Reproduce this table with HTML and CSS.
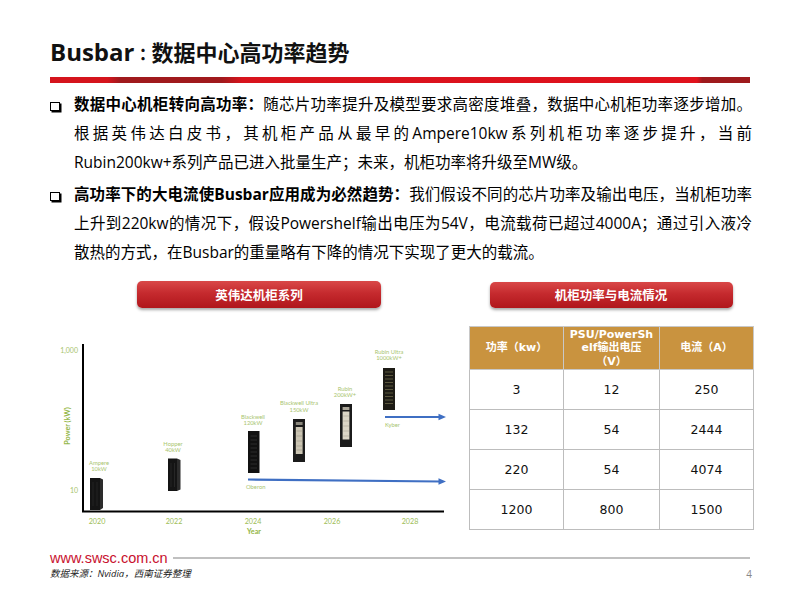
FILE: index.html
```html
<!DOCTYPE html>
<html lang="zh-CN">
<head>
<meta charset="utf-8">
<title>Busbar：数据中心高功率趋势</title>
<link rel="stylesheet" href="styles.css">
</head>
<body>
<div class="slide">
  <h1 class="title"><span class="lat">Busbar</span><span class="colon" lang="ja">：</span>数据中心高功率趋势</h1>
  <div class="rule"></div>

  <div class="points">
    <div class="point">
      <span class="box"></span>
      <p class="txt">
        <span class="ln"><b>数据中心机柜转向高功率：</b>随芯片功率提升及模型要求高密度堆叠，数据中心机柜功率逐步增加。</span>
        <span class="ln">根据英伟达白皮书，其机柜产品从最早的Ampere10kw系列机柜功率逐步提升，当前</span>
        <span class="ln last">Rubin200kw+系列产品已进入批量生产；未来，机柜功率将升级至MW级。</span>
      </p>
    </div>
    <div class="point">
      <span class="box"></span>
      <p class="txt">
        <span class="ln"><b>高功率下的大电流使Busbar应用成为必然趋势：</b>我们假设不同的芯片功率及输出电压，当机柜功率</span>
        <span class="ln">上升到220kw的情况下，假设Powershelf输出电压为54V，电流载荷已超过4000A；通过引入液冷</span>
        <span class="ln last">散热的方式，在Busbar的重量略有下降的情况下实现了更大的载流。</span>
      </p>
    </div>
  </div>

  <div class="charts">
    <div class="left">
      <div class="pill">英伟达机柜系列</div>
      <svg class="chart" viewBox="50 308 418 232" width="418" height="232" xmlns="http://www.w3.org/2000/svg">
        <!-- axes -->
        <line x1="83" y1="344" x2="83" y2="512" stroke="#000" stroke-width="2"/>
        <line x1="82" y1="511.5" x2="444" y2="511.5" stroke="#000" stroke-width="2"/>
        <g font-size="7" fill="#a7c46a">
          <text x="78" y="352.5" text-anchor="end">1,000</text>
          <text x="78" y="492.5" text-anchor="end">10</text>
        </g>
        <text x="0" y="0" transform="translate(69.5 426) rotate(-90)" text-anchor="middle" font-size="7.2" font-weight="700" fill="#93b646">Power (kW)</text>
        <g font-size="7.2" fill="#9dbd55" text-anchor="middle">
          <text x="97" y="524">2020</text>
          <text x="174" y="524">2022</text>
          <text x="253" y="524">2024</text>
          <text x="332" y="524">2026</text>
          <text x="410" y="524">2028</text>
        </g>
        <text x="254" y="534" font-size="7.2" font-weight="700" fill="#93b646" text-anchor="middle">Year</text>

        <!-- arrows -->
        <line x1="248" y1="479.5" x2="440" y2="481.5" stroke="#3f6fc3" stroke-width="2.2"/>
        <polygon points="438.5,478.3 446,481.6 438.5,484.8" fill="#3f6fc3"/>
        <line x1="385" y1="417" x2="440" y2="417" stroke="#3f6fc3" stroke-width="2.2"/>
        <polygon points="438.5,413.8 446,417 438.5,420.2" fill="#3f6fc3"/>

        <g font-size="5.8" fill="#a9c56f" text-anchor="middle">
          <text x="99" y="465">Ampere</text>
          <text x="99" y="471">10kW</text>
          <text x="173" y="446">Hopper</text>
          <text x="173" y="452">40kW</text>
          <text x="253" y="419">Blackwell</text>
          <text x="253" y="425">120kW</text>
          <text x="299" y="405">Blackwell Ultra</text>
          <text x="299" y="411.5">150kW</text>
          <text x="345" y="391">Rubin</text>
          <text x="345" y="397">200kW+</text>
          <text x="389" y="354">Rubin Ultra</text>
          <text x="389" y="360">1000kW+</text>
          <text x="246" y="488.5" text-anchor="start">Oberon</text>
          <text x="385" y="426.5" text-anchor="start">Kyber</text>
        </g>

        <!-- Ampere -->
        <rect x="90" y="478" width="10" height="32" fill="#141414"/>
        <polygon points="100,478 103,479.5 103,508 100,510" fill="#2c2c2c"/>
        <line x1="93" y1="482" x2="93" y2="506" stroke="#2e2e2e" stroke-width="0.6"/>
        <line x1="97" y1="482" x2="97" y2="506" stroke="#2e2e2e" stroke-width="0.6"/>
        <!-- Hopper -->
        <rect x="168" y="458.5" width="9" height="32.5" fill="#141414"/>
        <polygon points="177,458.5 180.5,460 180.5,489.5 177,491" fill="#2c2c2c"/>
        <line x1="171" y1="463" x2="171" y2="487" stroke="#2e2e2e" stroke-width="0.6"/>
        <line x1="174.5" y1="463" x2="174.5" y2="487" stroke="#333" stroke-width="0.6"/>
        <!-- Blackwell -->
        <rect x="248" y="431" width="11.5" height="42" fill="#111"/>
        <g stroke="#4a4a4a" stroke-width="0.5">
          <line x1="250.5" y1="436" x2="257" y2="436"/>
          <line x1="250.5" y1="440" x2="257" y2="440"/>
          <line x1="250.5" y1="444" x2="257" y2="444"/>
          <line x1="250.5" y1="448" x2="257" y2="448"/>
          <line x1="250.5" y1="452" x2="257" y2="452"/>
          <line x1="250.5" y1="456" x2="257" y2="456"/>
          <line x1="250.5" y1="460" x2="257" y2="460"/>
          <line x1="250.5" y1="464" x2="257" y2="464"/>
          <line x1="250.5" y1="468" x2="257" y2="468"/>
        </g>
        <!-- Blackwell Ultra -->
        <rect x="293" y="419" width="12" height="43" fill="#1b1b1b"/>
        <rect x="295.8" y="422" width="6.8" height="3" fill="#8a877c"/>
        <rect x="295.8" y="427" width="6.8" height="27" fill="#cbc5b3"/>
        <g stroke="#7e7a6c" stroke-width="0.4">
          <line x1="296.5" y1="431" x2="302" y2="431"/>
          <line x1="296.5" y1="436" x2="302" y2="436"/>
          <line x1="296.5" y1="441" x2="302" y2="441"/>
          <line x1="296.5" y1="446" x2="302" y2="446"/>
          <line x1="296.5" y1="450" x2="302" y2="450"/>
        </g>
        <!-- Rubin -->
        <rect x="340" y="404" width="12" height="43" fill="#1b1b1b"/>
        <rect x="342.6" y="407" width="6.8" height="3" fill="#aaa597"/>
        <rect x="342.6" y="411.5" width="6.8" height="28" fill="#dcd6c6"/>
        <g stroke="#8e8a7c" stroke-width="0.4">
          <line x1="343.3" y1="416" x2="349" y2="416"/>
          <line x1="343.3" y1="421" x2="349" y2="421"/>
          <line x1="343.3" y1="426" x2="349" y2="426"/>
          <line x1="343.3" y1="431" x2="349" y2="431"/>
          <line x1="343.3" y1="436" x2="349" y2="436"/>
        </g>
        <!-- Rubin Ultra -->
        <rect x="383" y="368" width="12" height="42" fill="#1d1b15"/>
        <g stroke="#6b6748" stroke-width="0.8">
          <line x1="385" y1="372" x2="393" y2="372"/>
          <line x1="385" y1="375.5" x2="393" y2="375.5"/>
          <line x1="385" y1="379" x2="393" y2="379"/>
          <line x1="385" y1="382.5" x2="393" y2="382.5"/>
          <line x1="385" y1="386" x2="393" y2="386"/>
          <line x1="385" y1="389.5" x2="393" y2="389.5"/>
          <line x1="385" y1="393" x2="393" y2="393"/>
          <line x1="385" y1="396.5" x2="393" y2="396.5"/>
          <line x1="385" y1="400" x2="393" y2="400"/>
          <line x1="385" y1="403.5" x2="393" y2="403.5"/>
        </g>
      </svg>
    </div>

    <div class="right">
      <div class="pill pill-r">机柜功率与电流情况</div>
      <table class="tbl">
        <colgroup><col class="c1"><col class="c2"><col class="c3"></colgroup>
        <thead>
          <tr>
            <th>功率（kw）</th>
            <th>PSU/PowerSh<br>elf输出电压<br>（V）</th>
            <th>电流（A）</th>
          </tr>
        </thead>
        <tbody>
          <tr><td>3</td><td>12</td><td>250</td></tr>
          <tr><td>132</td><td>54</td><td>2444</td></tr>
          <tr><td>220</td><td>54</td><td>4074</td></tr>
          <tr><td>1200</td><td>800</td><td>1500</td></tr>
        </tbody>
      </table>
    </div>
  </div>

  <div class="foot">
    <div class="url-row">
      <span class="url">www.swsc.com.cn</span>
      <span class="hr"></span>
    </div>
    <div class="src-row">
      <span class="src">数据来源：Nvidia，西南证券整理</span>
      <span class="pg">4</span>
    </div>
  </div>
</div>
</body>
</html>
```

FILE: styles.css
```css
* { box-sizing: border-box; margin: 0; padding: 0; }
html, body { width: 800px; height: 600px; overflow: hidden; background: #fff; }
body {
  font-family: "Open Sans", "Noto Sans CJK SC", sans-serif;
  color: #000;
}
.slide { width: 800px; height: 600px; padding-top: 37px; }

.title {
  margin-left: 50px;
  height: 30px;
  font-size: 22px;
  line-height: 30px;
  font-weight: 700;
  color: #111;
  white-space: nowrap;
}
.title .lat { font-size: 24px; line-height: 30px; }
.title .colon {
  font-family: "Noto Sans CJK JP", sans-serif;
  font-size: 17px;
  line-height: 30px;
}

.rule {
  margin: 10px 50px 0 50px;
  height: 6px;
  background: linear-gradient(to right,
    #d5141c 0%, #d5141c 8.2%,
    #a0191d 10%, #a0191d 24.5%,
    #d8131d 27.5%, #e0121c 92.4%,
    #9e1a1c 93.2%, #9e1a1c 100%);
}

.points { margin: 7px 48px 0 50px; }
.point { display: flex; }
.point + .point { margin-top: 3px; }
.box {
  flex: none;
  width: 9.5px;
  height: 9px;
  border: 1.5px solid #000;
  box-shadow: 1.5px 1.5px 0 #000;
  margin-top: 11.5px;
  margin-right: 14.5px;
}
.txt { flex: 1; font-size: 15.5px; line-height: 29px; }
.txt b { font-weight: 700; }
.ln { display: block; text-align: justify; text-align-last: justify; }
.ln.last { text-align-last: left; }

.charts { display: flex; gap: 1px; margin: 14px 0 0 50px; }
.left { width: 418px; }
.right { width: 284px; padding-top: 1px; }

.pill {
  width: 244px;
  height: 27px;
  margin: 0 auto;
  border-radius: 5px;
  background: linear-gradient(#d94848 0%, #c52a2e 45%, #b0161b 100%);
  box-shadow: 0 2px 3px rgba(0, 0, 0, 0.35);
  color: #fff;
  font-weight: 700;
  font-size: 12.5px;
  line-height: 27px;
  text-align: center;
  font-family: "Noto Sans CJK SC", sans-serif;
}
.pill-r { width: 243px; height: 26px; line-height: 26px; }

.chart { display: block; font-family: "Lato", "Liberation Sans", sans-serif; }

.tbl {
  margin-top: 18px;
  width: 284px;
  border-collapse: collapse;
  table-layout: fixed;
  font-family: "DejaVu Sans", "Noto Sans CJK SC", sans-serif;
}
.tbl .c1 { width: 94px; }
.tbl .c2 { width: 96px; }
.tbl .c3 { width: 94px; }
.tbl th {
  height: 43px;
  background: #c9933f;
  color: #fff;
  font-size: 11px;
  line-height: 13.5px;
  font-weight: 700;
  text-align: center;
  vertical-align: middle;
  border: 1px solid #c8c8c8;
}
.tbl td {
  height: 40px;
  text-align: center;
  vertical-align: middle;
  font-size: 12.5px;
  color: #111;
  border: 1px solid #bdbdbd;
}

.foot { margin: 9px 48px 0 50px; }
.url-row { display: flex; align-items: center; height: 18px; }
.url {
  font-family: "Liberation Sans", Arial, sans-serif;
  font-size: 14.5px;
  color: #c8102e;
  margin-right: 5px;
}
.hr { flex: 1; height: 2px; background: #c0c0c0; margin-right: 2px; }
.src-row { display: flex; justify-content: space-between; line-height: 14px; }
.src { font-style: italic; font-size: 9.5px; color: #222; }
.pg { font-size: 10px; color: #888; }
```
